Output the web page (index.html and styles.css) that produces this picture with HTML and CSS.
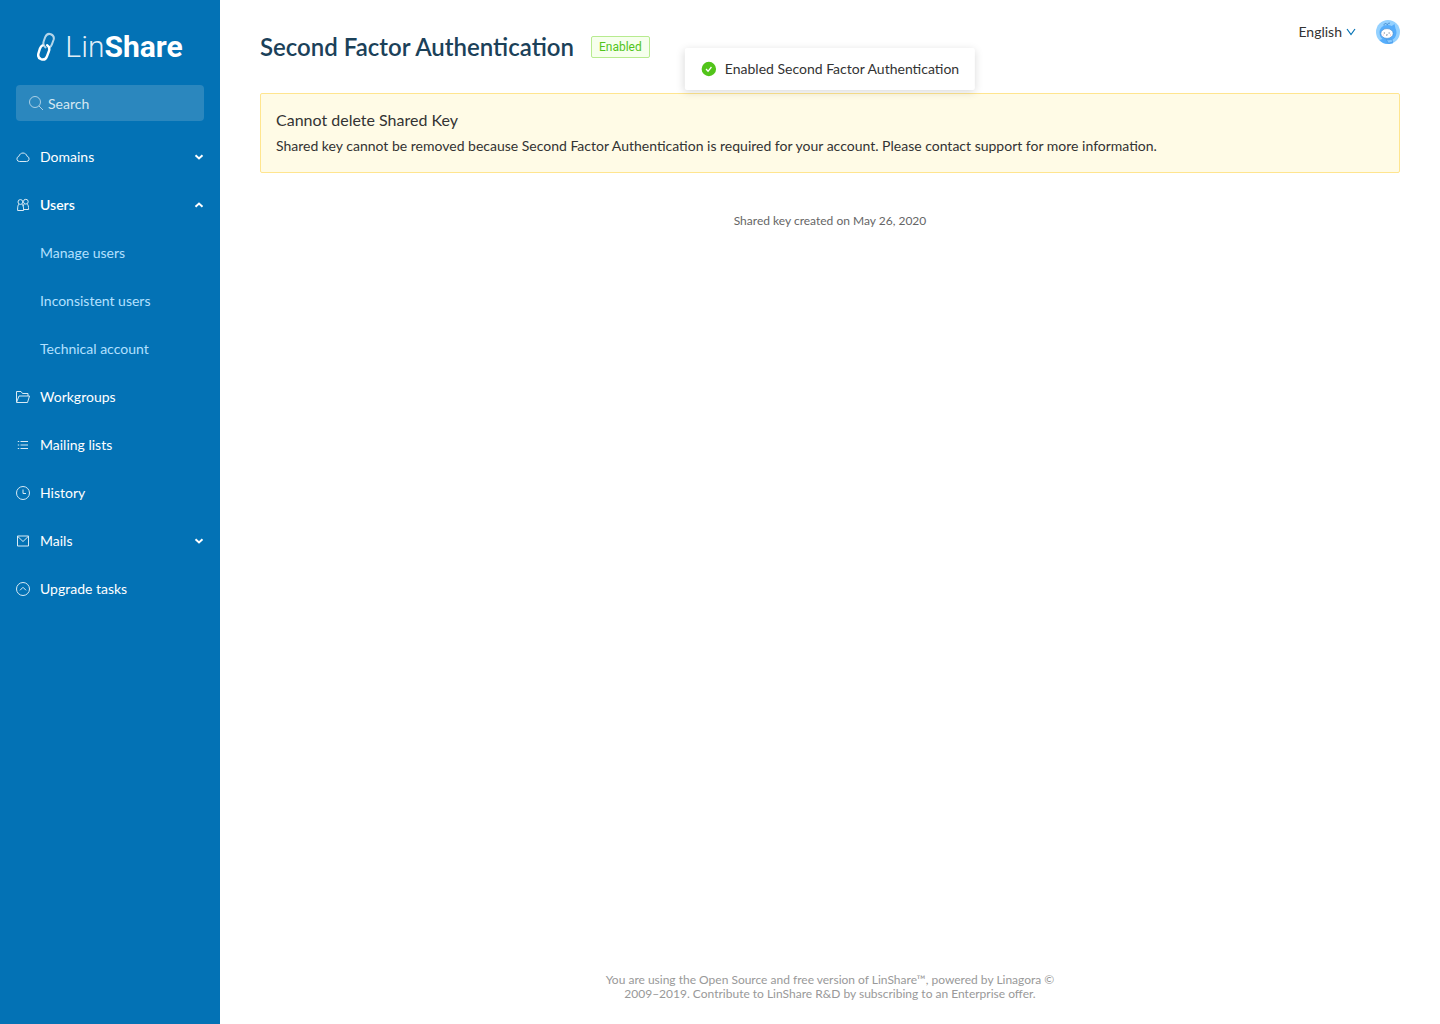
FILE: index.html
```html
<!DOCTYPE html>
<html lang="en">
<head>
<meta charset="utf-8">
<meta name="viewport" content="width=device-width, initial-scale=1">
<title>LinShare - Second Factor Authentication</title>
<link rel="stylesheet" href="styles.css">
</head>
<body>
<div class="layout">
  <aside class="sidebar">
    <a class="logo" href="#" aria-label="LinShare">
      <svg class="logo-mark" width="18" height="30" viewBox="0 0 18 30" fill="none" stroke="#fff" stroke-linecap="round" aria-hidden="true">
        <path d="M8.500 15.500C6.300 13.800 5.900 11.500 6.800 9L8.200 5.200C9.300 2.500 11.500 1.400 13.800 2.200C16.400 3.200 17.400 5.300 16.500 8L14.900 12.300C14.300 14 13.300 15 12.200 15.500" stroke-width="2" opacity=".7"/>
        <path d="M5.500 13.400C4.100 14 3.500 15.200 3 16.500L1.600 20.800C.7 23.600 1.600 26.200 4 27.200C6.500 28.100 8.900 27 9.900 24.500L11.700 19.800C12.800 17 12.400 14.500 10.200 13.200" stroke-width="2.400"/>
      </svg>
      <span class="logo-text">Lin<strong>Share</strong></span>
    </a>
    <label class="search">
      <svg width="16" height="16" viewBox="0 0 16 16" fill="none" stroke="currentColor" aria-hidden="true"><circle cx="7" cy="7" r="5.500"/><path d="M11 11l4 4"/></svg>
      <input type="search" placeholder="Search" aria-label="Search">
    </label>
    <nav class="menu">
      <button class="item" type="button" aria-expanded="false">
        <svg class="icon" viewBox="0 0 14 14" aria-hidden="true"><path d="M3.600 11.500h6.800a2.600 2.600 0 0 0 .8-5.100C10.500 4.300 9 3 7 3S3.500 4.300 2.800 6.400a2.600 2.600 0 0 0 .8 5.100z"/></svg>
        <span>Domains</span>
        <svg class="chevron" viewBox="0 0 10 10" aria-hidden="true"><path d="M1.500 3.300L5 6.500l3.500-3.200"/></svg>
      </button>
      <button class="item item-open" type="button" aria-expanded="true">
        <svg class="icon" viewBox="0 0 14 14" aria-hidden="true"><circle cx="4.400" cy="4" r="2.400"/><circle cx="9.800" cy="3.700" r="2.400"/><path d="M3 6.100C1.900 7 1.600 8.500 1.600 12.500h6c0-4-.4-5.500-1.700-6.400M8.400 5.900C7.600 6.400 7.200 7.300 7 8.300M7.600 11.500h5c0-3-.4-4.700-1.400-5.600"/></svg>
        <span>Users</span>
        <svg class="chevron" viewBox="0 0 10 10" aria-hidden="true"><path d="M1.500 6.800L5 3.500l3.500 3.300"/></svg>
      </button>
      <a class="item item-sub" href="#">Manage users</a>
      <a class="item item-sub" href="#">Inconsistent users</a>
      <a class="item item-sub" href="#">Technical account</a>
      <a class="item" href="#">
        <svg class="icon" viewBox="0 0 14 14" aria-hidden="true"><path d="M.5 12V1.500h4.500l1.500 2h5.500V6M.5 12.500L3 6h10.500l-2 6.500z"/></svg>
        <span>Workgroups</span>
      </a>
      <a class="item" href="#">
        <svg class="icon" viewBox="0 0 14 14" aria-hidden="true"><path d="M4.500 3.500H12M4.500 7H12M4.500 10.500H12M1.800 3.500h1.400M1.800 7h1.400M1.800 10.500h1.400"/></svg>
        <span>Mailing lists</span>
      </a>
      <a class="item" href="#">
        <svg class="icon" viewBox="0 0 14 14" aria-hidden="true"><circle cx="7" cy="7" r="6.500"/><path d="M7 3.500v4h3"/></svg>
        <span>History</span>
      </a>
      <button class="item" type="button" aria-expanded="false">
        <svg class="icon" viewBox="0 0 14 14" aria-hidden="true"><path d="M1.500 2h11v10h-11zM1.800 2.500L7 7.500l5.200-5"/></svg>
        <span>Mails</span>
        <svg class="chevron" viewBox="0 0 10 10" aria-hidden="true"><path d="M1.500 3.300L5 6.500l3.500-3.200"/></svg>
      </button>
      <a class="item" href="#">
        <svg class="icon" viewBox="0 0 14 14" aria-hidden="true"><circle cx="7" cy="7" r="6.500"/><path d="M4 8.300l3-3 3 3"/></svg>
        <span>Upgrade tasks</span>
      </a>
    </nav>
  </aside>

  <div class="content">
    <header class="header">
      <div class="heading">
        <h1>Second Factor Authentication</h1>
        <span class="tag">Enabled</span>
      </div>
      <div class="account">
        <button class="language" type="button">English
          <svg width="10" height="10" viewBox="0 0 10 10" fill="none" stroke="#0372b5" stroke-width="1.200" aria-hidden="true"><path d="M1 2l4 5.500L9 2"/></svg>
        </button>
        <button class="avatar" type="button" aria-label="Account">
          <svg width="24" height="24" viewBox="0 0 24 24" aria-hidden="true">
            <circle cx="12" cy="12" r="12" fill="#94d1ff"/>
            <path d="M3.500 12.500C3.500 8 7 5 11.500 5c1.500 0 3 .3 4.300 1L18.500 4l1 4.500c.8 1.500 1.100 3 .9 5-.4 3.500-2.400 5.500-4.400 6.500l1 3.200C12 24.700 6.500 24 3.500 20l3-1C4.500 17.500 3.500 15 3.500 12.500z" fill="#56adfb"/>
            <path d="M8 5.500C8 3 10 3 11.500 4.800c.3-1.500 1.500-2.300 2.500-1.300" fill="none" stroke="#347fc7" stroke-width=".8"/>
            <ellipse cx="11" cy="13.500" rx="6.200" ry="4.900" fill="#fff" stroke="#347fc7" stroke-width=".6"/>
            <path d="M7.800 13h1.100M12.600 13h1.100M10 14.800q.8.700 1.600 0" stroke="#37506e" stroke-width=".8" fill="none"/>
            <path d="M6.800 15h1M14 15h1" stroke="#ffb4b4"/>
            <path d="M10 19.500c2 .8 3.500.3 5.500-.5l1.500 3-4.500 1.200z" fill="#84c8ff" stroke="#3b88d8" stroke-width=".5"/>
          </svg>
        </button>
      </div>
    </header>

    <main class="main">
      <section class="notice">
        <h2>Cannot delete Shared Key</h2>
        <p>Shared key cannot be removed because Second Factor Authentication is required for your account. Please contact support for more information.</p>
      </section>
      <p class="created">Shared key created on May 26, 2020</p>
    </main>

    <footer class="footer">You are using the Open Source and free version of LinShare™, powered by Linagora © 2009–2019. Contribute to LinShare R&amp;D by subscribing to an Enterprise offer.</footer>

    <div class="toast" role="status">
      <svg width="16" height="16" viewBox="0 0 16 16" aria-hidden="true"><circle cx="8" cy="8" r="7.200" fill="#52c41a"/><path d="M5.200 8l2 2.300 3.400-4.300" fill="none" stroke="#fff" stroke-width="1.300"/></svg>
      <span>Enabled Second Factor Authentication</span>
    </div>
  </div>
</div>
</body>
</html>
```
FILE: styles.css
```css
* {
  box-sizing: border-box;
}

body {
  margin: 0;
  font: 14px/22px Lato, sans-serif;
  color: #333;
  background: #fff;
}

h1,
h2,
p {
  margin: 0;
}

button {
  padding: 0;
  border: 0;
  background: none;
  color: inherit;
  font: inherit;
  cursor: pointer;
}

a {
  color: inherit;
  text-decoration: none;
}

.layout {
  display: grid;
  grid-template-columns: 220px minmax(0, 1fr);
  min-height: 100vh;
}

/* Sidebar */
.sidebar {
  padding: 32px 16px;
  background: #0372b5;
  color: #fff;
}

.logo {
  display: flex;
  justify-content: center;
  align-items: center;
  gap: 10px;
  height: 30px;
  margin-bottom: 23px;
}

.logo-text {
  font: 300 30px/30px Roboto, sans-serif;
  color: rgba(255, 255, 255, 0.9);
}

.logo-text strong {
  font-weight: 700;
  color: #fff;
}

.search {
  display: flex;
  align-items: center;
  gap: 4px;
  height: 36px;
  margin-bottom: 12px;
  padding: 0 12px;
  border-radius: 4px;
  background: #2b87be;
  color: rgba(255, 255, 255, 0.6);
}

.search svg {
  flex: none;
}

.search input {
  flex: 1;
  min-width: 0;
  padding: 2px 0 0;
  border: 0;
  outline: 0;
  background: none;
  color: #fff;
  font: inherit;
}

.search input::placeholder {
  color: #d5e7f2;
  opacity: 1;
}

.menu {
  display: flex;
  flex-direction: column;
}

.item {
  display: flex;
  align-items: center;
  gap: 10px;
  height: 48px;
  text-align: left;
}

.item-open {
  font-weight: 600;
}

.item-sub {
  padding-left: 24px;
  color: #b3e0ff;
}

.icon {
  width: 14px;
  height: 14px;
  fill: none;
  stroke: #d9eaf4;
}

.chevron {
  width: 10px;
  height: 10px;
  margin-left: auto;
  fill: none;
  stroke: #fff;
  stroke-width: 2;
}

/* Content */
.content {
  position: relative;
  display: flex;
  flex-direction: column;
  padding: 20px 40px 23px;
}

.header {
  display: flex;
  justify-content: space-between;
  align-items: flex-start;
  margin-bottom: 30px;
}

.heading {
  display: flex;
  align-items: center;
  gap: 17px;
  padding-top: 11px;
}

h1 {
  font-size: 24px;
  line-height: 32px;
  font-weight: 600;
  color: #1b4159;
}

.tag {
  padding: 0 7px;
  border: 1px solid #b7eb8f;
  border-radius: 2px;
  background: #f6ffed;
  color: #52c41a;
  font: 12px/20px Roboto, sans-serif;
}

.account {
  display: flex;
  align-items: center;
  gap: 20px;
}

.language {
  display: flex;
  align-items: center;
  gap: 4px;
}

.avatar {
  display: flex;
}

.main {
  flex: 1;
}

.notice {
  margin-bottom: 40px;
  padding: 15px;
  border: 1px solid #ffe58f;
  border-radius: 2px;
  background: #fffbe6;
}

.notice h2 {
  margin-bottom: 4px;
  font-size: 16px;
  line-height: 22px;
  font-weight: 400;
}

.created {
  font-size: 12px;
  line-height: 16px;
  text-align: center;
  color: #666;
}

.footer {
  max-width: 460px;
  margin: 0 auto;
  font-size: 12px;
  line-height: 14px;
  text-align: center;
  color: #999;
}

.toast {
  position: absolute;
  top: 48px;
  left: 50%;
  transform: translateX(-50%);
  display: flex;
  align-items: center;
  gap: 8px;
  padding: 10px 16px;
  border-radius: 2px;
  background: #fff;
  box-shadow: 0 2px 8px rgba(0, 0, 0, 0.15);
  white-space: nowrap;
}
```
